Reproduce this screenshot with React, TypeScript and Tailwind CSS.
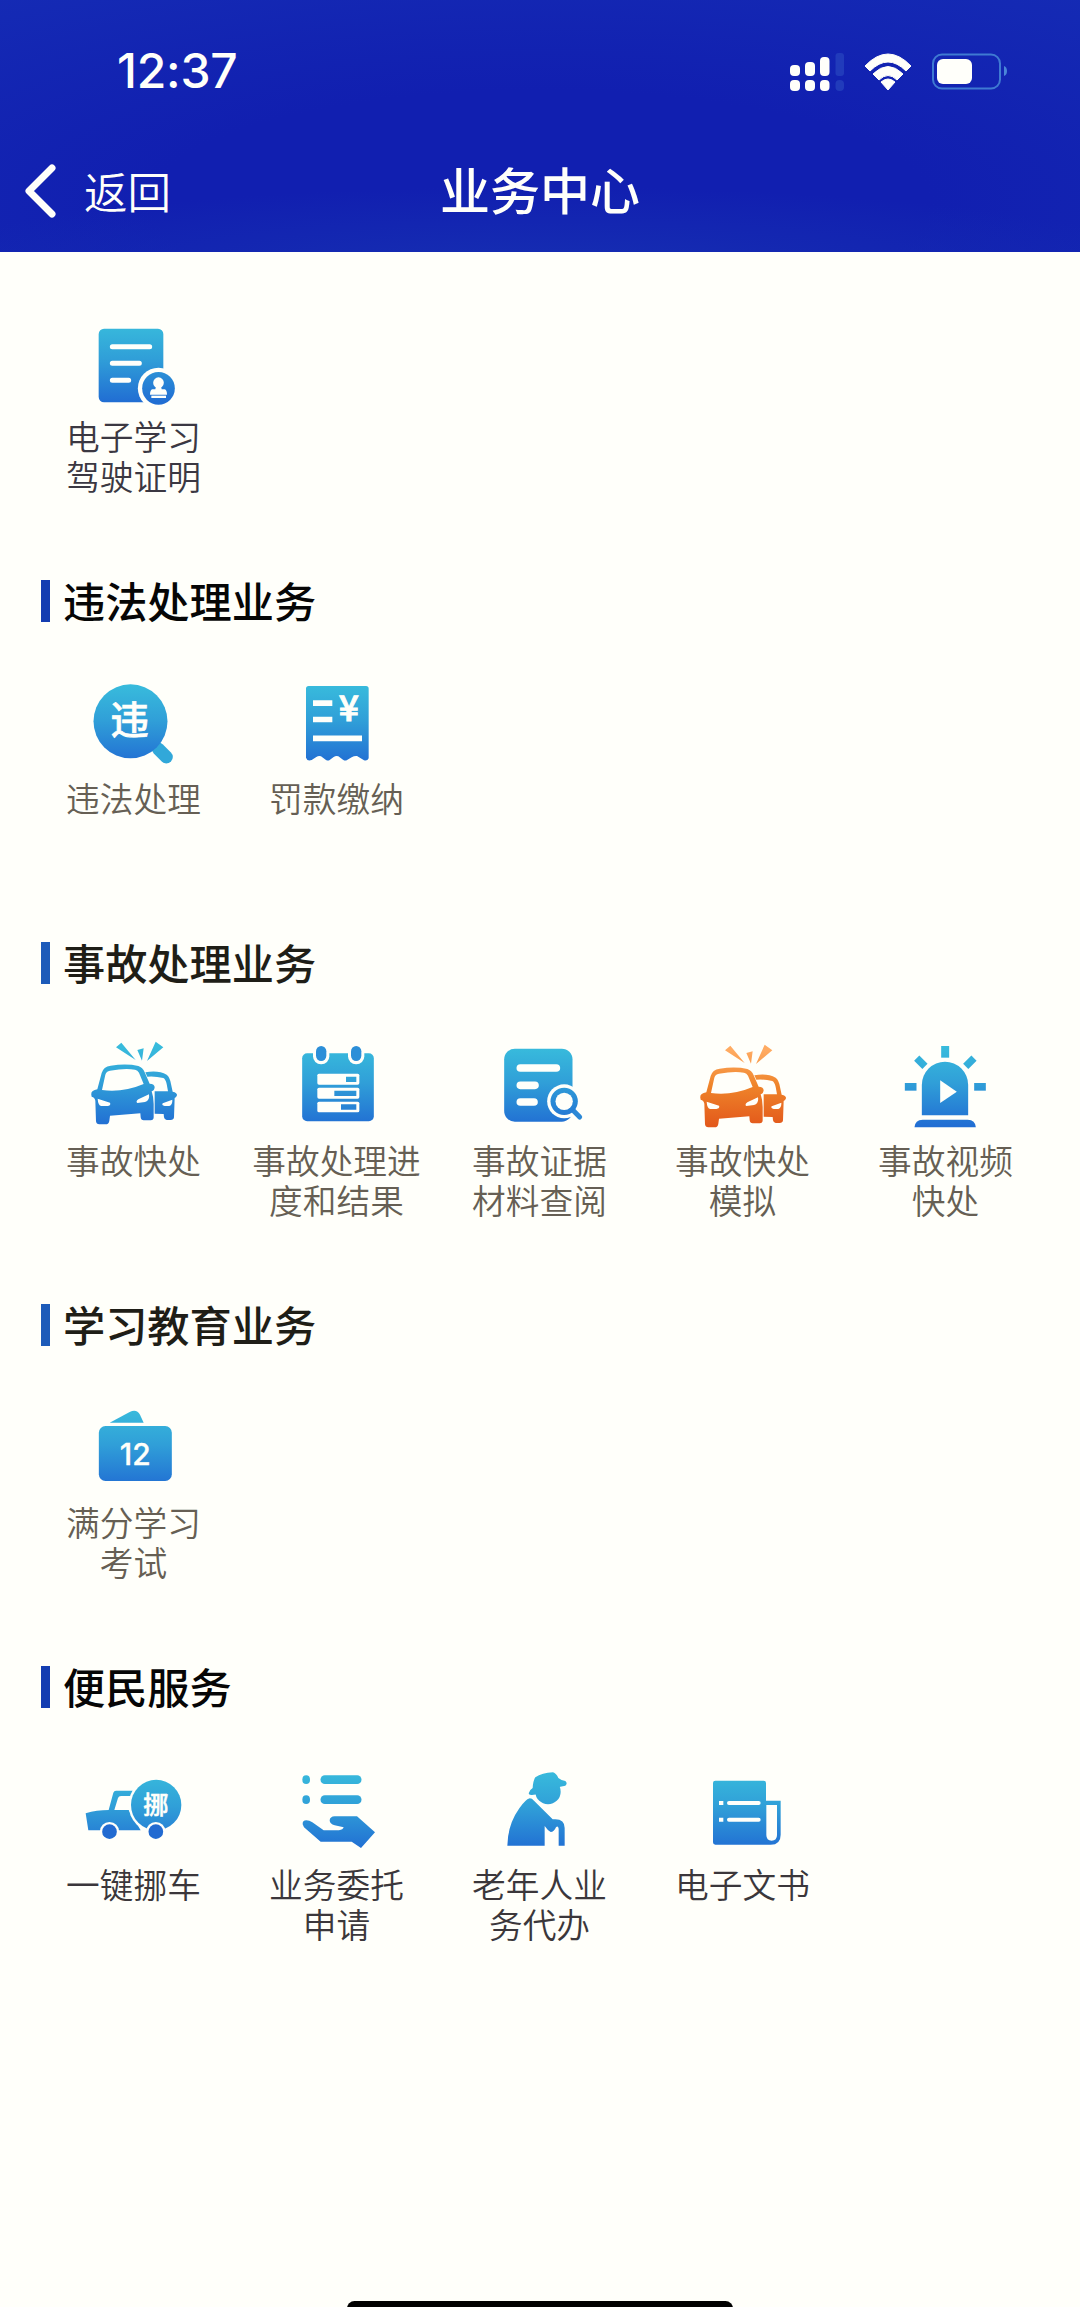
import React from 'react';

type IconProps = {
  children: React.ReactNode;
  warm?: boolean;
};

// every menu icon is drawn on a 300 x 300 grid and shares one vertical gradient
const Icon = ({ children, warm = false }: IconProps) => {
  const id = React.useId();
  return (
    <svg viewBox="2 0 300 300" className="block h-[100px] w-[100px]" fill={`url(#${id})`}>
      <defs>
        <linearGradient id={id} gradientUnits="userSpaceOnUse" x1="0" y1="40" x2="0" y2="275">
          <stop offset="0" stopColor={warm ? '#ffab62' : '#38bbdc'} />
          <stop offset="0.45" stopColor={warm ? '#ef842a' : '#309fd8'} />
          <stop offset="1" stopColor={warm ? '#e2561a' : '#216ed3'} />
        </linearGradient>
      </defs>
      {children}
    </svg>
  );
};

const paper = '#fffffa';

const CertificateIcon = () => (
  <Icon>
    <rect x="46" y="56" width="194" height="221" rx="16" />
    <path d="M87 110H199M87 160H168M87 211H136" stroke={paper} strokeWidth="15" strokeLinecap="round" />
    <circle cx="225.500" cy="235" r="62" fill={paper} />
    <circle cx="225.500" cy="235" r="49" />
    <g fill={paper}>
      <circle cx="225.500" cy="218" r="16" />
      <path d="M218 228h15l2 10h9q7 2 7 16h-51q0-14 7-16h9z" />
      <rect x="204" y="257" width="44" height="7" />
    </g>
  </Icon>
);

const ViolationIcon = () => (
  <Icon>
    <path d="M225 231L249 255" stroke="#31a8d9" strokeWidth="39" strokeLinecap="round" />
    <circle cx="141.500" cy="148" r="111" />
    <text x="139" y="187" textAnchor="middle" fontSize="115" fontWeight="500" fill={paper} stroke={paper} strokeWidth="2">违</text>
  </Icon>
);

const ReceiptIcon = () => (
  <Icon>
    <path d="M67 42H239Q247 42 247 50V259Q243 268 233 265L212 252Q204 251 196 256L181 265Q176 267 170 263L156 253Q149 250 142 255L129 265Q124 267 118 263L104 253Q97 250 90 255L76 264Q63 269 59 257V50Q59 42 67 42Z" />
    <path d="M80 93.500H138M80 142.500H138M80 199H227" stroke={paper} strokeWidth="17" />
    <text x="187.500" y="146" textAnchor="middle" fontSize="106" fontWeight="500" fill={paper} stroke={paper} strokeWidth="3">¥</text>
  </Icon>
);

const CrashShape = () => (
  <>
    <path d="M98 40L114 26L157 78ZM162 48L181 43L176 80ZM217 23L240 40L191 81Z" />
    <path d="M42 166L55 117Q60 98 82 95Q130 88 165 96Q178 100 184 115L199 149Q214 150 214 160Q213 170 205 172Q211 190 211 210V250Q211 259 202 259H181Q173 259 172 250L171 238L80 245L78 260Q77 271 66 271H48Q39 271 38 262L36 200Q34 190 25 188Q20 172 34 168Z" />
    <path d="M186 115Q225 108 250 122Q260 130 263 150L268 173Q282 176 281 184Q279 190 274 192L272 250Q271 258 262 258H250Q243 257 242 250L241 240L214 239V172H254L250 150Q247 136 240 132Q215 126 192 128Z" />
    <path fill={paper} d="M56 168L66 122Q69 112 80 110Q125 102 155 107Q163 108 167 116L181 150Q120 176 56 168ZM43 194L80 206Q84 214 72 216H54Q44 214 43 194ZM197 181L165 196Q156 203 162 207L185 204Q200 200 197 181ZM267 197L238 208Q234 214 244 216H258Q268 212 267 197Z" />
  </>
);

const CrashIcon = () => (
  <Icon>
    <CrashShape />
  </Icon>
);

const CrashDemoIcon = () => (
  <Icon warm>
    <g transform="translate(0 9)">
      <CrashShape />
    </g>
  </Icon>
);

const ProgressIcon = () => (
  <Icon>
    <rect x="47.500" y="58" width="215" height="204" rx="15" />
    <g fill={paper}>
      <rect x="80" y="30" width="49" height="61" rx="24" />
      <rect x="185" y="30" width="49" height="61" rx="24" />
    </g>
    <g fill="#2c8fd8">
      <rect x="89" y="36" width="31" height="45" rx="15.500" />
      <rect x="194" y="36" width="31" height="45" rx="15.500" />
    </g>
    <g fill={paper}>
      <rect x="93" y="119" width="126" height="33" rx="5" />
      <rect x="93" y="161" width="126" height="33" rx="5" />
      <rect x="93" y="203" width="126" height="32" rx="5" />
    </g>
    <path d="M179 128H210V144H179ZM144 170H210V186H144ZM164 211H210V227H164Z" />
  </Icon>
);

const EvidenceIcon = () => (
  <Icon>
    <rect x="44.500" y="44" width="205" height="219" rx="32" />
    <path d="M93 102H201M93 154H137M93 204H134" stroke={paper} strokeWidth="23" strokeLinecap="round" />
    <circle cx="224.500" cy="202" r="51" fill={paper} />
    <path d="M249 227L280 258" stroke={paper} strokeWidth="26" />
    <path d="M251 229L271 249" stroke="#2b88d6" strokeWidth="15" strokeLinecap="round" />
    <circle cx="224.500" cy="202" r="41" />
    <circle cx="224.500" cy="202" r="26" fill={paper} />
  </Icon>
);

const SirenIcon = () => (
  <Icon>
    <path d="M79.500 244V152.500A69.500 69.500 0 0 1 218.500 152.500V244Z" />
    <path d="M57.500 280Q59 257 82 257H217Q240 257 241.500 280Z" />
    <path fill={paper} d="M134.500 139L184.500 173L134.500 207Z" />
    <rect x="137.500" y="36" width="24" height="35" />
    <rect x="28.500" y="147" width="35" height="23" />
    <rect x="236.500" y="147" width="35" height="23" />
    <rect x="59" y="74" width="35" height="22" transform="rotate(45 76.500 85)" />
    <rect x="206" y="74" width="35" height="22" transform="rotate(-45 223.500 85)" />
  </Icon>
);

const ExamIcon = () => (
  <Icon>
    <path d="M79 80L139 48Q160 38 170 56L181 80Z" />
    <rect x="46.500" y="90" width="219" height="165" rx="20" />
    <text x="155.500" y="206" textAnchor="middle" fontSize="90" fontWeight="500" fill={paper} stroke={paper} strokeWidth="1" className="font-['Inter']">12</text>
  </Icon>
);

const MoveCarIcon = () => (
  <Icon>
    <path d="M7 166Q40 156 76 156L90 104Q92 98 98 98H160L146 114H113Q106 114 104 120L93 156H136L172 217H15Z" />
    <circle cx="218.500" cy="141" r="83" fill={paper} />
    <circle cx="218.500" cy="141" r="75.500" />
    <g fill={paper}>
      <circle cx="78.500" cy="221" r="29" />
      <circle cx="217.500" cy="221" r="29" />
    </g>
    <g fill="#226bd1">
      <circle cx="78.500" cy="221" r="22" />
      <circle cx="217.500" cy="221" r="22" />
    </g>
    <text x="218" y="168" textAnchor="middle" fontSize="76" fontWeight="500" fill={paper} stroke={paper} strokeWidth="1.500">挪</text>
  </Icon>
);

const EntrustIcon = () => (
  <Icon>
    <ellipse cx="59.500" cy="65" rx="11.500" ry="13" />
    <ellipse cx="59.500" cy="125" rx="11.500" ry="13" />
    <rect x="102.500" y="52" width="123" height="26" rx="13" />
    <rect x="102.500" y="112" width="123" height="26" rx="13" />
    <path d="M49 199Q48 187 60 187Q69 187 78 193L112 217H158Q170 215 172 208L145 202Q130 198 130 187Q131 176 145 175H212L266 223L224 270L196 251H103L53 208Z" />
  </Icon>
);

const ElderIcon = () => (
  <Icon>
    <circle cx="176" cy="101" r="38" />
    <path d="M118 106Q120 96 130 90Q131 68 138 58Q158 45 191 43Q201 46 207 60Q216 67 228 69Q236 76 228 83L213 86L150 108L128 111Q118 112 118 106Z" />
    <path d="M54 263Q55 200 90 151Q108 125 121 121Q128 121 134 128L190 184Q226 180 226 210V263H208V212Q206 202 200 208Q194 222 184 222Q174 216 166 204V263Z" />
  </Icon>
);

const DocumentIcon = () => (
  <Icon>
    <path d="M69 68H214Q221 68 221 75V128H265V230Q265 260 235 260H69Q62 260 62 253V75Q62 68 69 68Z" />
    <path fill={paper} d="M222 141H254V231Q254 248 238 248Q222 248 222 231ZM80 129H93V141H80ZM80 179H93V191H80Z" />
    <path d="M110 135H199M110 185H199" stroke={paper} strokeWidth="12" strokeLinecap="round" />
  </Icon>
);

type Item = {
  icon: React.ReactNode;
  lines: string[];
};

type SectionProps = {
  title?: string;
  items: Item[];
  titleClass?: string;
  barClass?: string;
  labelClass?: string;
};

const Section = ({
  title,
  items,
  titleClass = 'text-[#1f1e17]',
  barClass = 'bg-[#1d5bb9]',
  labelClass = 'text-[#665f54]',
}: SectionProps) => (
  <section className={title ? 'h-[362px]' : 'h-[328px] pt-[58px]'}>
    {title && (
      <div className="mb-[50px] flex h-[42px] items-start pl-[41px]">
        <span className={`h-full w-[9px] ${barClass}`} />
        <h2 className={`-mt-px ml-[13px] text-[42.2px] leading-[41px] font-medium ${titleClass}`}>{title}</h2>
      </div>
    )}
    <div className="ml-8 grid w-[1015px] grid-cols-5">
      {items.map((item) => (
        <div key={item.lines.join('')} className="flex flex-col items-center">
          {item.icon}
          <p className={`mt-[6px] text-center text-[33.7px] leading-[40px] font-[350] whitespace-nowrap ${labelClass}`}>
            {item.lines.map((line) => (
              <span key={line} className="block">{line}</span>
            ))}
          </p>
        </div>
      ))}
    </div>
  </section>
);

const StatusBar = () => (
  <div className="flex h-[142px] items-center justify-between pr-[72px] pl-[117px] text-[#fffffa]">
    <span className="font-['Inter'] text-[48px] leading-none font-medium tracking-[-0.2px]">12:37</span>
    <svg viewBox="0 0 220 44" className="h-[44px] w-[220px]" fill="currentColor">
      <g>
        <rect x="2" y="16" width="10" height="11" rx="4" />
        <rect x="17" y="13" width="10" height="14" rx="4" />
        <rect x="32" y="8" width="9.500" height="19" rx="4" />
        <rect x="2" y="31" width="10" height="11" rx="4" />
        <rect x="17" y="31" width="10" height="11" rx="4" />
        <rect x="32" y="31" width="9.500" height="11" rx="4" />
      </g>
      <g fill="#213bbb">
        <rect x="47.500" y="4" width="8.500" height="23" rx="3" />
        <rect x="47.500" y="31" width="8.500" height="11" rx="4" />
      </g>
      <path d="M77 17Q100 -7 123 17L118 22Q100 4 82 22ZM85 25Q100 10 115 25L109 31Q100 22 91 31ZM93 33Q100 27 107 33L100 41Z" stroke="currentColor" strokeWidth="1" strokeLinejoin="round" />
      <rect x="145" y="5.500" width="67" height="34" rx="9" fill="none" stroke="#3f7ad2" strokeWidth="2" />
      <rect x="149" y="10" width="35" height="25" rx="6" />
      <path d="M216 17Q219 18 219 22Q219 26 216 27Z" fill="#4a86d8" />
    </svg>
  </div>
);

const Header = () => (
  <header className="h-[252px] bg-[radial-gradient(ellipse_60%_34%_at_50%_108%,#152cb2_20%,transparent),radial-gradient(ellipse_90%_110%_at_50%_80%,#111fb0_40%,#152cb5_100%)]">
    <StatusBar />
    <div className="grid h-[98px] grid-cols-3 items-center text-[#fffffa]">
      <button className="flex items-center pl-[25px]">
        <svg viewBox="0 0 32 54" className="h-[54px] w-[32px]" fill="none" stroke="currentColor" strokeWidth="7" strokeLinecap="round" strokeLinejoin="round">
          <path d="M27 4L4 27L27 50" />
        </svg>
        <span className="ml-[27px] text-[43.5px] leading-[60px] font-[350]">返回</span>
      </button>
      <h1 className="mb-[7px] text-center text-[50px] leading-[60px] font-medium">业务中心</h1>
    </div>
  </header>
);

const App = () => {
  return (
    <div className="h-[2307px] w-[1080px] overflow-hidden bg-[#fffffa] font-['Noto_Sans_CJK_SC',sans-serif]">
      <Header />
      <main className="h-[2049px]">
        <Section
          labelClass="text-[#3b3842]"
          items={[{ icon: <CertificateIcon />, lines: ['电子学习', '驾驶证明'] }]}
        />
        <Section
          title="违法处理业务"
          titleClass="text-[#060606]"
          barClass="bg-[#143db1]"
          items={[
            { icon: <ViolationIcon />, lines: ['违法处理'] },
            { icon: <ReceiptIcon />, lines: ['罚款缴纳'] },
          ]}
        />
        <Section
          title="事故处理业务"
          items={[
            { icon: <CrashIcon />, lines: ['事故快处'] },
            { icon: <ProgressIcon />, lines: ['事故处理进', '度和结果'] },
            { icon: <EvidenceIcon />, lines: ['事故证据', '材料查阅'] },
            { icon: <CrashDemoIcon />, lines: ['事故快处', '模拟'] },
            { icon: <SirenIcon />, lines: ['事故视频', '快处'] },
          ]}
        />
        <Section
          title="学习教育业务"
          items={[{ icon: <ExamIcon />, lines: ['满分学习', '考试'] }]}
        />
        <Section
          title="便民服务"
          titleClass="text-[#060606]"
          barClass="bg-[#143db1]"
          labelClass="text-[#3b373b]"
          items={[
            { icon: <MoveCarIcon />, lines: ['一键挪车'] },
            { icon: <EntrustIcon />, lines: ['业务委托', '申请'] },
            { icon: <ElderIcon />, lines: ['老年人业', '务代办'] },
            { icon: <DocumentIcon />, lines: ['电子文书'] },
          ]}
        />
      </main>
      <div className="mx-auto h-[15px] w-[386px] rounded-full bg-black" />
    </div>
  );
};

export default App;
